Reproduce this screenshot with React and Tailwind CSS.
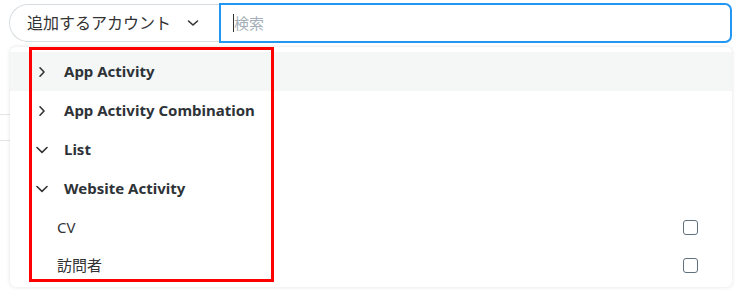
import React from "react";

const Right = () => (
  <svg width="12" height="12" viewBox="0 0 12 12" fill="none" stroke="#333" strokeWidth="1.6" strokeLinecap="round" strokeLinejoin="round">
    <path d="M4 1.8 L8 6 L4 10.2" />
  </svg>
);
const Down = () => (
  <svg width="12" height="12" viewBox="0 0 12 12" fill="none" stroke="#333" strokeWidth="1.6" strokeLinecap="round" strokeLinejoin="round">
    <path d="M1 3.5 L6 8.3 L11 3.5" />
  </svg>
);

function Group({ label, open, hl }) {
  return (
    <div className={`flex h-[39px] items-center pl-[26px] ${hl ? "bg-[#f5f7f7]" : ""}`}>
      <div className="flex w-[28px] items-center">{open ? <Down /> : <Right />}</div>
      <span className="text-[15px] font-bold text-[#2e3338]">{label}</span>
    </div>
  );
}

function Item({ label }) {
  return (
    <div className="flex h-[38px] items-center justify-between pl-[47px] pr-[34px]">
      <span className="text-[15px] text-[#333]">{label}</span>
      <span className="h-[15px] w-[15px] rounded-[3px] border border-[#62707d]" />
    </div>
  );
}

export default function App() {
  return (
    <div
      className="relative h-[300px] w-[739px] overflow-hidden bg-white"
      style={{ fontFamily: '"Noto Sans", "Noto Sans CJK JP", sans-serif' }}
    >
      <div className="absolute left-0 top-[114px] h-px w-[12px] bg-[#e3e6e8]" />
      <div className="absolute left-0 top-[140px] h-px w-[12px] bg-[#e3e6e8]" />
      <div className="flex items-center pl-[9px] pr-[7px] pt-[3px]">
        <div className="flex h-[38px] w-[210px] items-center justify-between rounded-l-full border border-r-0 border-[#d7dce0] pl-[17px] pr-[20px]">
          <span className="text-[16px] text-[#333]">追加するアカウント</span>
          <svg width="12" height="12" viewBox="0 0 12 12" fill="none" stroke="#333" strokeWidth="1.6" strokeLinecap="round" strokeLinejoin="round">
            <path d="M1.5 4 L6 8 L10.5 4" />
          </svg>
        </div>
        <div className="flex h-[40px] flex-1 items-center rounded-r-[7px] border-2 border-[#2196f3] pl-[12px]">
          <span className="h-[18px] w-px bg-[#333]" />
          <span className="text-[15px] text-[#a3aeb8]">検索</span>
        </div>
      </div>
      <div className="relative ml-[10px] mr-[7px] mt-[4px] h-[240px] rounded-md bg-white pt-[5px] shadow-[0_0_4px_rgba(0,0,0,0.12)]">
        <Group label="App Activity" hl />
        <Group label="App Activity Combination" />
        <Group label="List" open />
        <Group label="Website Activity" open />
        <Item label="CV" />
        <Item label="訪問者" />
      </div>
      <div className="pointer-events-none absolute left-[29px] top-[47px] h-[235px] w-[245px] border-[3px] border-[#ff0000]" />
    </div>
  );
}
